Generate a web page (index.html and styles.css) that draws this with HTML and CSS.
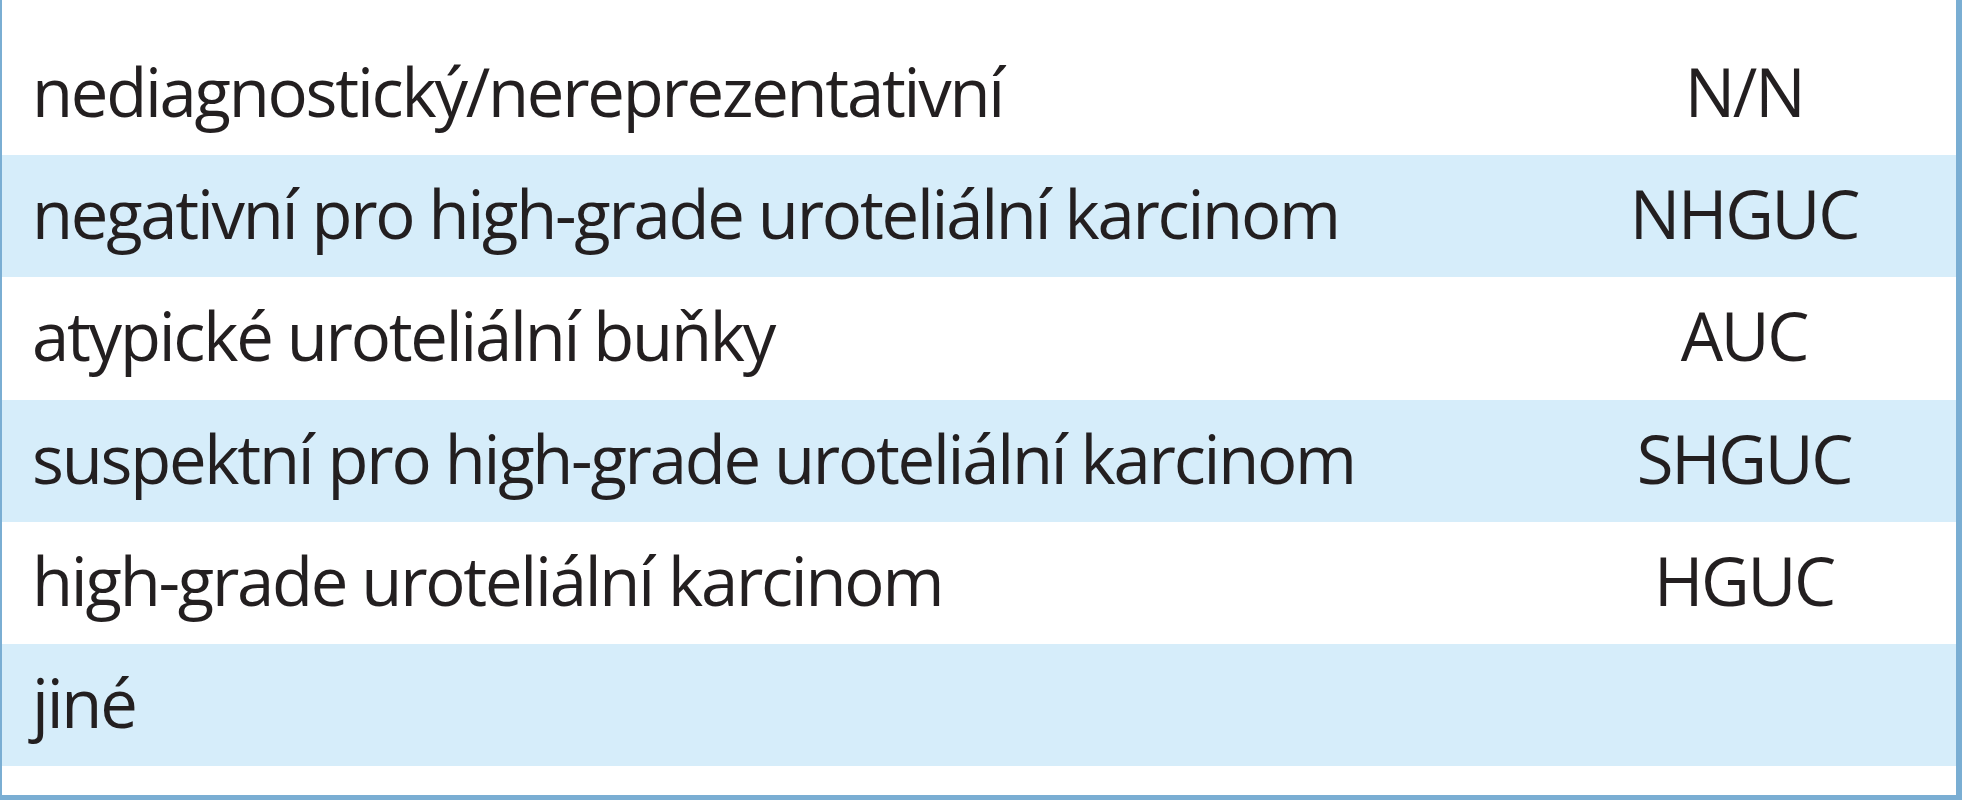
FILE: index.html
```html
<!DOCTYPE html>
<html lang="cs">
<head>
<meta charset="utf-8">
<title>Tabulka</title>
<link rel="stylesheet" href="styles.css">
</head>
<body>
<div class="frame">
  <div class="table">
    <div class="row"><span class="term">nediagnostický/nereprezentativní</span><span class="abbr">N/N</span></div>
    <div class="row alt"><span class="term">negativní pro high-grade uroteliální karcinom</span><span class="abbr">NHGUC</span></div>
    <div class="row"><span class="term">atypické uroteliální buňky</span><span class="abbr">AUC</span></div>
    <div class="row alt"><span class="term">suspektní pro high-grade uroteliální karcinom</span><span class="abbr">SHGUC</span></div>
    <div class="row"><span class="term">high-grade uroteliální karcinom</span><span class="abbr">HGUC</span></div>
    <div class="row alt"><span class="term">jiné</span><span class="abbr"></span></div>
  </div>
</div>
</body>
</html>
```

FILE: styles.css
```css
html, body {
  margin: 0;
  padding: 0;
  background: #ffffff;
}

body {
  width: 1968px;
  height: 800px;
  overflow: hidden;
}

.frame {
  box-sizing: border-box;
  width: 1962px;
  height: 800px;
  border-left: 2px solid #7aaed3;
  border-right: 6px solid #7aaed3;
  border-bottom: 5px solid #7aaed3;
  background: #ffffff;
  padding-top: 33px;
}

.table {
  display: flex;
  flex-direction: column;
}

.row {
  box-sizing: border-box;
  height: 122.2px;
  padding-bottom: 5px;
  display: grid;
  grid-template-columns: 1fr 424px;
  align-items: center;
  font-family: "Open Sans", "Noto Sans", sans-serif;
  font-size: 67px;
  line-height: 1;
  letter-spacing: -2.25px;
  color: #231f20;
}

.row.alt {
  background: #d6edfa;
}

.term {
  padding-left: 30px;
  white-space: nowrap;
}

.abbr {
  text-align: center;
  white-space: nowrap;
}
```
